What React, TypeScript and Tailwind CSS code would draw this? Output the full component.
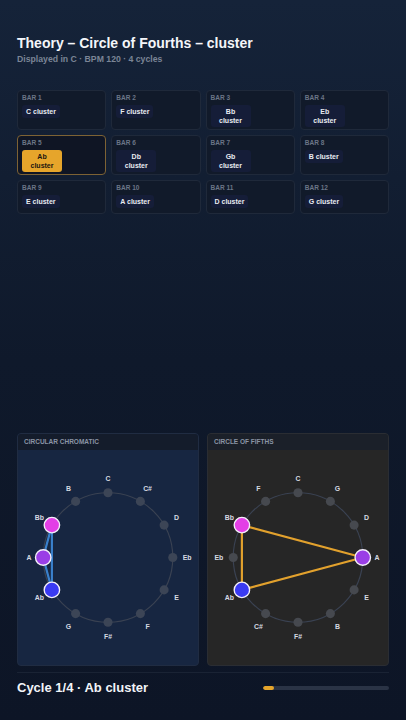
import React from 'react'

const bars = [
  'C', 'F', 'Bb', 'Eb',
  'Ab', 'Db', 'Gb', 'B',
  'E', 'A', 'D', 'G',
]
const activeBar = 4

const chromatic = ['C', 'C#', 'D', 'Eb', 'E', 'F', 'F#', 'G', 'Ab', 'A', 'Bb', 'B']
const fifths = ['C', 'G', 'D', 'A', 'E', 'B', 'F#', 'C#', 'Ab', 'Eb', 'Bb', 'F']

const activeColors: Record<string, string> = {
  Bb: '#e33fe6',
  A: '#9a3ee6',
  Ab: '#3a3af2',
}

function Wheel({ notes, line, dot }: { notes: string[]; line: string; dot: string }) {
  const cx = 91
  const cy = 108.5
  const r = 65.5
  const lr = 80
  const pos = (i: number, rad: number) => {
    const a = ((-90 + i * 30) * Math.PI) / 180
    return { x: cx + rad * Math.cos(a), y: cy + rad * Math.sin(a) }
  }
  const active = notes.map((n, i) => ({ n, i })).filter((o) => activeColors[o.n])
  const pairs: [number, number][] = []
  for (let a = 0; a < active.length; a++)
    for (let b = a + 1; b < active.length; b++) pairs.push([active[a].i, active[b].i])

  return (
    <svg viewBox="0 0 182 217" className="w-full h-full">
      <circle cx={cx} cy={cy} r={r} fill="none" stroke="#3a4252" strokeWidth="1.2" />
      {pairs.map(([a, b]) => {
        const p = pos(a, r)
        const q = pos(b, r)
        return (
          <line key={`${a}-${b}`} x1={p.x} y1={p.y} x2={q.x} y2={q.y} stroke={line} strokeWidth="2.2" strokeLinecap="round" />
        )
      })}
      {notes.map((n, i) => {
        const p = pos(i, r)
        const l = pos(i, lr)
        const c = activeColors[n]
        return (
          <g key={n}>
            {c ? (
              <circle cx={p.x} cy={p.y} r="7.8" fill={c} stroke="#f3eefa" strokeWidth="1.4" />
            ) : (
              <circle cx={p.x} cy={p.y} r="4.6" fill={dot} />
            )}
            <text
              x={l.x}
              y={l.y}
              textAnchor="middle"
              dominantBaseline="central"
              fontSize="7"
              fontWeight="700"
              fill="#d6dae2"
              fontFamily="'Liberation Sans', Arial, sans-serif"
            >
              {n}
            </text>
          </g>
        )
      })}
    </svg>
  )
}

export default function App() {
  return (
    <div className="h-[720px] w-full flex flex-col px-[17px] bg-linear-to-b from-[#152339] via-[#0f192b] to-[#0d1526] font-['Liberation_Sans',Arial,sans-serif] text-white overflow-hidden">
      {/* Header */}
      <div className="pt-[35px]">
        <h1 className="text-[14px] leading-[17px] font-bold text-[#f4f6fa]">Theory – Circle of Fourths – cluster</h1>
        <p className="mt-[2px] text-[8.7px] leading-[11px] font-bold text-[#7b8596]">Displayed in C · BPM 120 · 4 cycles</p>
      </div>

      {/* Bars */}
      <div className="mt-[25px] grid grid-cols-4 gap-[5px]">
        {bars.map((b, i) => {
          const on = i === activeBar
          return (
            <div
              key={i}
              className={`min-h-[34px] rounded-[4px] border px-[4px] pt-[3px] pb-[2px] ${
                on ? 'border-[#7d6234] bg-[#0f1524]' : 'border-[#1f293a] bg-[#111a2a]'
              }`}
            >
              <div className="text-[6.5px] leading-[8px] font-bold text-[#6b7586] uppercase">Bar {i + 1}</div>
              <div
                className={`mt-[3px] block w-fit max-w-[40px] rounded-[3px] px-[4px] py-[2px] text-center text-[7px] leading-[9px] font-bold ${
                  on ? 'bg-[#e6a52b] text-[#1b1710]' : 'bg-[#151d38] text-[#e8ebf1]'
                }`}
              >
                {b} cluster
              </div>
            </div>
          )
        })}
      </div>

      <div className="flex-1" />

      {/* Wheels */}
      <div className="grid grid-cols-2 gap-[8px] h-[233px]">
        <div className="flex flex-col rounded-[4px] border border-[#202c42] bg-[#172641] overflow-hidden">
          <div className="h-[16px] shrink-0 bg-[#141c2b] px-[6px] flex items-center text-[6.5px] font-bold text-[#8a94a5] uppercase">Circular Chromatic</div>
          <div className="flex-1">
            <Wheel notes={chromatic} line="#3a80cc" dot="#3c4556" />
          </div>
        </div>
        <div className="flex flex-col rounded-[4px] border border-[#2a2d33] bg-[#262626] overflow-hidden">
          <div className="h-[16px] shrink-0 bg-[#1b2029] px-[6px] flex items-center text-[6.5px] font-bold text-[#8a94a5] uppercase">Circle of Fifths</div>
          <div className="flex-1">
            <Wheel notes={fifths} line="#e2a12d" dot="#46494f" />
          </div>
        </div>
      </div>

      {/* Footer */}
      <div className="mt-[6px] border-t border-[#1a2334] pt-[7px] pb-[24px] flex items-center justify-between">
        <div className="text-[13px] leading-[16px] font-bold text-[#f2f4f8]">Cycle 1/4 · Ab cluster</div>
        <div className="w-[126px] h-[4px] rounded-full bg-[#2a3345] overflow-hidden">
          <div className="h-full rounded-full bg-[#e6a52b]" style={{ width: `${(1 / 11) * 100}%` }} />
        </div>
      </div>
    </div>
  )
}
